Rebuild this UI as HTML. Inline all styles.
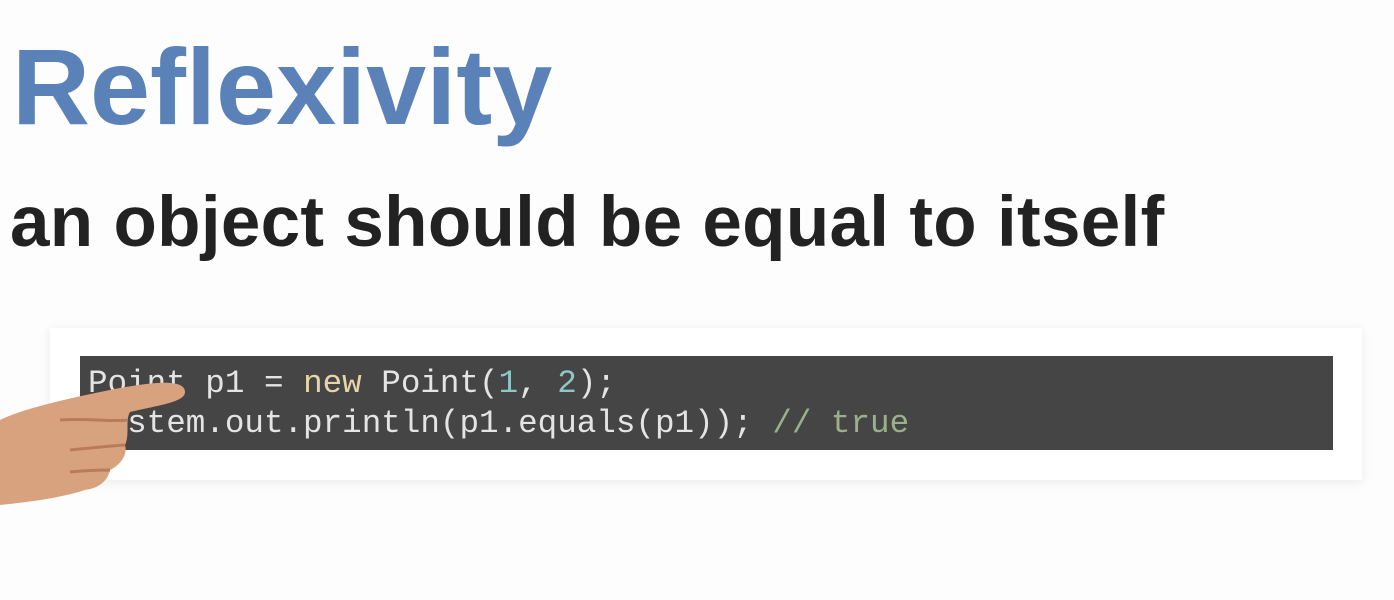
<!DOCTYPE html>
<html><head><meta charset="utf-8"><style>
body{margin:0;width:1394px;height:600px;background:#fdfdfd;position:relative;overflow:hidden;font-family:"Liberation Sans",sans-serif}
.t{position:absolute;left:12px;top:24px;font-size:108px;font-weight:bold;color:#5a82b8;letter-spacing:0}
.s{position:absolute;left:10px;top:182px;font-size:71px;font-weight:bold;color:#222;white-space:nowrap;letter-spacing:0.3px}
.card{position:absolute;left:50px;top:328px;width:1312px;height:152px;background:#fff;box-shadow:0 2px 10px rgba(0,0,0,.08)}
.code{position:absolute;left:80px;top:356px;width:1253px;height:94px;background:#454545;}
pre{margin:0;position:absolute;left:88px;top:364px;font-family:"Liberation Mono",monospace;font-size:32.6px;line-height:40px;color:#e4e4e4}
.k{color:#e6d5a8}.n{color:#8fc6c6}.c{color:#9bb08a}
</style></head><body>
<div class="t">Reflexivity</div>
<div class="s">an object should be equal to itself</div>
<div class="card"></div>
<div class="code"></div>
<pre>Point p1 = <span class="k">new</span> Point(<span class="n">1</span>, <span class="n">2</span>);
System.out.println(p1.equals(p1)); <span class="c">// true</span></pre>
<svg style="position:absolute;left:0;top:380px" width="200" height="130">
<path d="M0 40 C20 30 60 20 110 10 C160 0 185 0 185 12 C185 22 160 25 130 32 C125 40 130 55 125 65 C128 75 120 85 110 90 C108 100 100 108 85 110 C60 118 30 122 0 125 Z" fill="#d9a27f"/>
<path d="M60 40 C90 38 110 42 128 40 M70 70 C90 68 110 66 125 65 M70 92 C90 90 100 90 110 90" stroke="#b87c5a" stroke-width="3" fill="none"/>
</svg>
</body></html>
